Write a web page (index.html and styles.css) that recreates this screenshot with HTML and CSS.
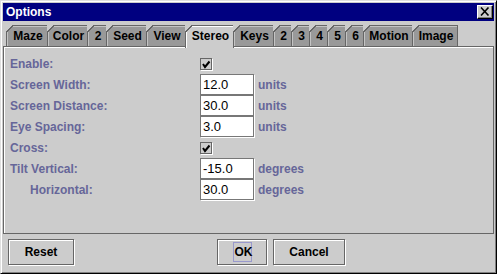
FILE: index.html
```html
<!DOCTYPE html>
<html>
<head>
<meta charset="utf-8">
<link rel="stylesheet" href="styles.css">
</head>
<body>
<div class="window">
  <div class="titlebar">
    <span class="title">Options</span>
    <span class="close"><svg width="10" height="9" viewBox="0 0 10 9"><path d="M1 0.5 L8.5 8.5 M8.5 0.5 L1 8.5" stroke="#000" stroke-width="1.6" fill="none"/></svg></span>
  </div>
  <div class="tabs">
    <div class="tab">Maze</div>
    <div class="tab">Color</div>
    <div class="tab">2</div>
    <div class="tab">Seed</div>
    <div class="tab">View</div>
    <div class="tab selected">Stereo</div>
    <div class="tab">Keys</div>
    <div class="tab">2</div>
    <div class="tab">3</div>
    <div class="tab">4</div>
    <div class="tab">5</div>
    <div class="tab">6</div>
    <div class="tab">Motion</div>
    <div class="tab">Image</div>
  </div>
  <div class="panel">
    <div class="form">
      <div class="label">Enable:</div>
      <div class="cell"><span class="check"><svg width="10" height="10" viewBox="0 0 10 10"><path d="M2 5 L4 8 L8.5 2.5" stroke="#000" stroke-width="2" fill="none"/></svg></span></div>
      <div class="unit"></div>

      <div class="label">Screen Width:</div>
      <div class="cell"><span class="field">12.0</span></div>
      <div class="unit">units</div>

      <div class="label">Screen Distance:</div>
      <div class="cell"><span class="field">30.0</span></div>
      <div class="unit">units</div>

      <div class="label">Eye Spacing:</div>
      <div class="cell"><span class="field">3.0</span></div>
      <div class="unit">units</div>

      <div class="label">Cross:</div>
      <div class="cell"><span class="check"><svg width="10" height="10" viewBox="0 0 10 10"><path d="M2 5 L4 8 L8.5 2.5" stroke="#000" stroke-width="2" fill="none"/></svg></span></div>
      <div class="unit"></div>

      <div class="label">Tilt Vertical:</div>
      <div class="cell"><span class="field">-15.0</span></div>
      <div class="unit">degrees</div>

      <div class="label indent">Horizontal:</div>
      <div class="cell"><span class="field">30.0</span></div>
      <div class="unit">degrees</div>
    </div>
  </div>
  <div class="buttons">
    <button class="btn reset">Reset</button>
    <button class="btn ok"><span class="focus">OK</span></button>
    <button class="btn cancel">Cancel</button>
  </div>
</div>
</body>
</html>
```

FILE: styles.css
```css
* { box-sizing: border-box; }
html, body { margin: 0; padding: 0; background: #cccccc; }
body { font-family: "Liberation Sans", Arial, sans-serif; }

.window {
  width: 497px;
  height: 274px;
  background: #cccccc;
  border: 1px solid;
  border-color: #dfdfdf #000 #000 #dfdfdf;
  box-shadow: inset 1px 1px 0 #fff, inset -1px -1px 0 #808080;
  padding: 2px;
  display: flex;
  flex-direction: column;
}

.titlebar {
  height: 18px;
  background: #000080;
  display: flex;
  align-items: flex-start;
  justify-content: space-between;
  flex: none;
}
.title {
  color: #fff;
  font-weight: bold;
  font-size: 12px;
  line-height: 18px;
  padding-left: 3px;
}
.close {
  margin-top: 2px;
  margin-right: 1px;
  width: 16px;
  height: 14px;
  background: #cccccc;
  border: 1px solid;
  border-color: #fff #000 #000 #fff;
  box-shadow: inset -1px -1px 0 #808080;
  display: flex;
  align-items: center;
  justify-content: center;
  padding-bottom: 1px;
}
.close svg { display: block; }

.tabs {
  height: 25px;
  flex: none;
  padding: 4px 0 0 3px;
  display: grid;
  grid-template-columns: 41px 40px 19px 40px 39px 48px 40px 18px 18px 18px 18px 18px 49px 45px;
  align-items: end;
  position: relative;
  z-index: 1;
}
.tab {
  position: relative;
  width: calc(100% + 1px);
  height: 21px;
  background: #999999;
  border: 1px solid #666666;
  border-bottom: none;
  box-shadow: inset 1px 1px 0 #c4c4c4;
  font-size: 12px;
  font-weight: bold;
  color: #000;
  text-align: center;
  line-height: 21px;
  padding-left: 2px;
  white-space: nowrap;
}
.tab::before {
  content: "";
  position: absolute;
  left: -1px;
  top: -1px;
  width: 7px;
  height: 7px;
  background: linear-gradient(to bottom right, #cccccc 0, #cccccc calc(50% - 0.6px), #666666 calc(50% - 0.6px), #666666 calc(50% + 0.8px), transparent calc(50% + 0.8px));
}
.tab.selected {
  background: #cccccc;
  box-shadow: inset 1px 1px 0 #ffffff;
  height: 23px;
  margin-bottom: -2px;
  padding-bottom: 2px;
}

.panel {
  height: 188px;
  flex: none;
  border: 1px solid #666666;
  box-shadow: inset 1px 1px 0 #ffffff;
  padding: 6px 6px 0 6px;
}
.form {
  display: grid;
  grid-template-columns: 190px 54px auto;
  grid-auto-rows: 21px;
  align-items: center;
}
.label, .unit {
  color: #666699;
  font-size: 12px;
  font-weight: bold;
  white-space: nowrap;
}
.unit { padding-left: 4px; }
.label.indent { padding-left: 20px; }
.cell { display: flex; align-items: center; height: 21px; }
.check {
  width: 12px;
  height: 12px;
  border: 1px solid #666666;
  box-shadow: 1px 1px 0 #ffffff;
  background: #cccccc;
  display: flex;
  align-items: center;
  justify-content: center;
}
.check svg { display: block; }
.field {
  display: block;
  width: 54px;
  height: 21px;
  background: #ffffff;
  border: 1px solid #777777;
  box-shadow: 1px 1px 0 #ffffff;
  font-size: 13px;
  line-height: 19px;
  padding-left: 2px;
  color: #000;
}

.buttons {
  flex: 1;
  display: flex;
  align-items: flex-start;
  padding: 5px 0 0 5px;
}
.btn {
  height: 26px;
  margin: 0;
  padding: 0;
  font-family: "Liberation Sans", Arial, sans-serif;
  font-size: 12px;
  font-weight: bold;
  color: #000;
  background: #cccccc;
  border: 1px solid #666666;
  box-shadow: inset 1px 1px 0 #ffffff, 1px 1px 0 #ffffff;
  display: flex;
  align-items: center;
  justify-content: center;
}
.reset { width: 66px; }
.ok { width: 50px; margin-left: 143px; }
.cancel { width: 72px; margin-left: 6px; }
.focus {
  border: 1px solid #9999cc;
  padding: 2px 0 2px 1px;
  width: 19px;
  line-height: 14px;
}
```
